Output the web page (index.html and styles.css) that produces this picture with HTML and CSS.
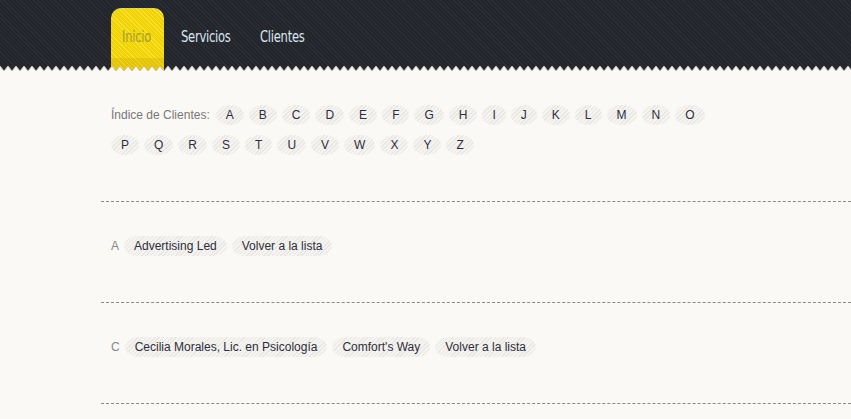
FILE: index.html
```html
<!DOCTYPE html>
<html lang="es">
<head>
<meta charset="utf-8">
<title>Clientes</title>
<link rel="stylesheet" href="styles.css">
</head>
<body>
<header class="header">
  <nav class="nav">
    <a class="nav-item active" href="#"><span class="nav-text">Inicio</span></a>
    <a class="nav-item" href="#"><span class="nav-text">Servicios</span></a>
    <a class="nav-item" href="#"><span class="nav-text">Clientes</span></a>
  </nav>
  <svg class="zigzag" width="100%" height="6" aria-hidden="true">
    <defs>
      <pattern id="zz" width="8" height="6" patternUnits="userSpaceOnUse">
        <path d="M0 0 L4 5 L8 0 L8 6 L0 6 Z" fill="#faf9f6"/>
        <path d="M0 0 L4 5 L8 0" fill="none" stroke="#c4bdae" stroke-width="1"/>
      </pattern>
    </defs>
    <rect width="100%" height="6" fill="url(#zz)"/>
  </svg>
</header>
<main class="content">
  <div class="index">
    <span class="index-label">Índice de Clientes:</span>
    <a class="pill" href="#">A</a>
    <a class="pill" href="#">B</a>
    <a class="pill" href="#">C</a>
    <a class="pill" href="#">D</a>
    <a class="pill" href="#">E</a>
    <a class="pill" href="#">F</a>
    <a class="pill" href="#">G</a>
    <a class="pill" href="#">H</a>
    <a class="pill" href="#">I</a>
    <a class="pill" href="#">J</a>
    <a class="pill" href="#">K</a>
    <a class="pill" href="#">L</a>
    <a class="pill" href="#">M</a>
    <a class="pill" href="#">N</a>
    <a class="pill" href="#">O</a>
    <a class="pill" href="#">P</a>
    <a class="pill" href="#">Q</a>
    <a class="pill" href="#">R</a>
    <a class="pill" href="#">S</a>
    <a class="pill" href="#">T</a>
    <a class="pill" href="#">U</a>
    <a class="pill" href="#">V</a>
    <a class="pill" href="#">W</a>
    <a class="pill" href="#">X</a>
    <a class="pill" href="#">Y</a>
    <a class="pill" href="#">Z</a>
  </div>
  <section class="section">
    <span class="section-letter">A</span>
    <a class="pill" href="#">Advertising Led</a>
    <a class="pill" href="#">Volver a la lista</a>
  </section>
  <section class="section">
    <span class="section-letter">C</span>
    <a class="pill" href="#">Cecilia Morales, Lic. en Psicología</a>
    <a class="pill" href="#">Comfort's Way</a>
    <a class="pill" href="#">Volver a la lista</a>
  </section>
  <div class="divider"></div>
</main>
</body>
</html>
```
FILE: styles.css
```css
html, body {
  margin: 0;
  padding: 0;
}
body {
  background: #faf9f6;
  font-family: "Liberation Sans", Arial, sans-serif;
  font-size: 12px;
  color: #333;
}
a {
  text-decoration: none;
}
.header {
  position: relative;
  height: 72px;
  background: repeating-linear-gradient(45deg, #22252a 0 2px, #2b2e34 2px 3px);
}
.nav {
  display: flex;
  align-items: flex-start;
  padding-left: 111px;
  height: 72px;
}
.nav-item {
  font-family: "DejaVu Sans Condensed", sans-serif;
  font-size: 16px;
  line-height: 58px;
  margin-top: 8px;
  padding: 0 11px;
  margin-right: 6px;
  color: #dce6f2;
}
.nav-text {
  display: inline-block;
  transform-origin: left center;
  letter-spacing: -0.3px;
}
.nav-item:nth-child(1) .nav-text { width: 31px; }
.nav-item:nth-child(2) .nav-text { width: 51px; }
.nav-item:nth-child(3) .nav-text { width: 45px; }
.nav-text {
  transform: scaleX(0.8);
  white-space: nowrap;
}
.nav-item.active {
  color: #a39b2c;
  height: 64px;
  border-radius: 10px 10px 0 0;
  background:
    linear-gradient(to bottom, transparent 50px, rgba(160, 120, 0, 0.16) 50px),
    repeating-linear-gradient(45deg, #f0d209 0 2px, #fbe22a 2px 3px);
}
.zigzag {
  position: absolute;
  left: 0;
  bottom: 0;
  display: block;
}
.content {
  margin-left: 101px;
}
.index {
  display: flex;
  flex-wrap: wrap;
  align-items: center;
  gap: 10px 5px;
  max-width: 620px;
  padding: 33px 0 46px 10px;
}
.index-label {
  color: #777;
  margin-right: 1px;
  line-height: 20px;
}
.pill {
  display: inline-block;
  height: 20px;
  line-height: 20px;
  padding: 0 10px;
  border-radius: 14px / 10px;
  color: #2d2d3a;
  background: repeating-linear-gradient(-45deg, #e8e7e4 0 1px, #f5f4f1 1px 3px);
  white-space: nowrap;
}
.section {
  display: flex;
  align-items: center;
  gap: 5px;
  border-top: 1px dashed #8a8a8a;
  padding: 34px 10px 46px;
}
.section-letter {
  color: #888;
  line-height: 20px;
}
.divider {
  border-top: 1px dashed #8a8a8a;
  height: 20px;
}
```
